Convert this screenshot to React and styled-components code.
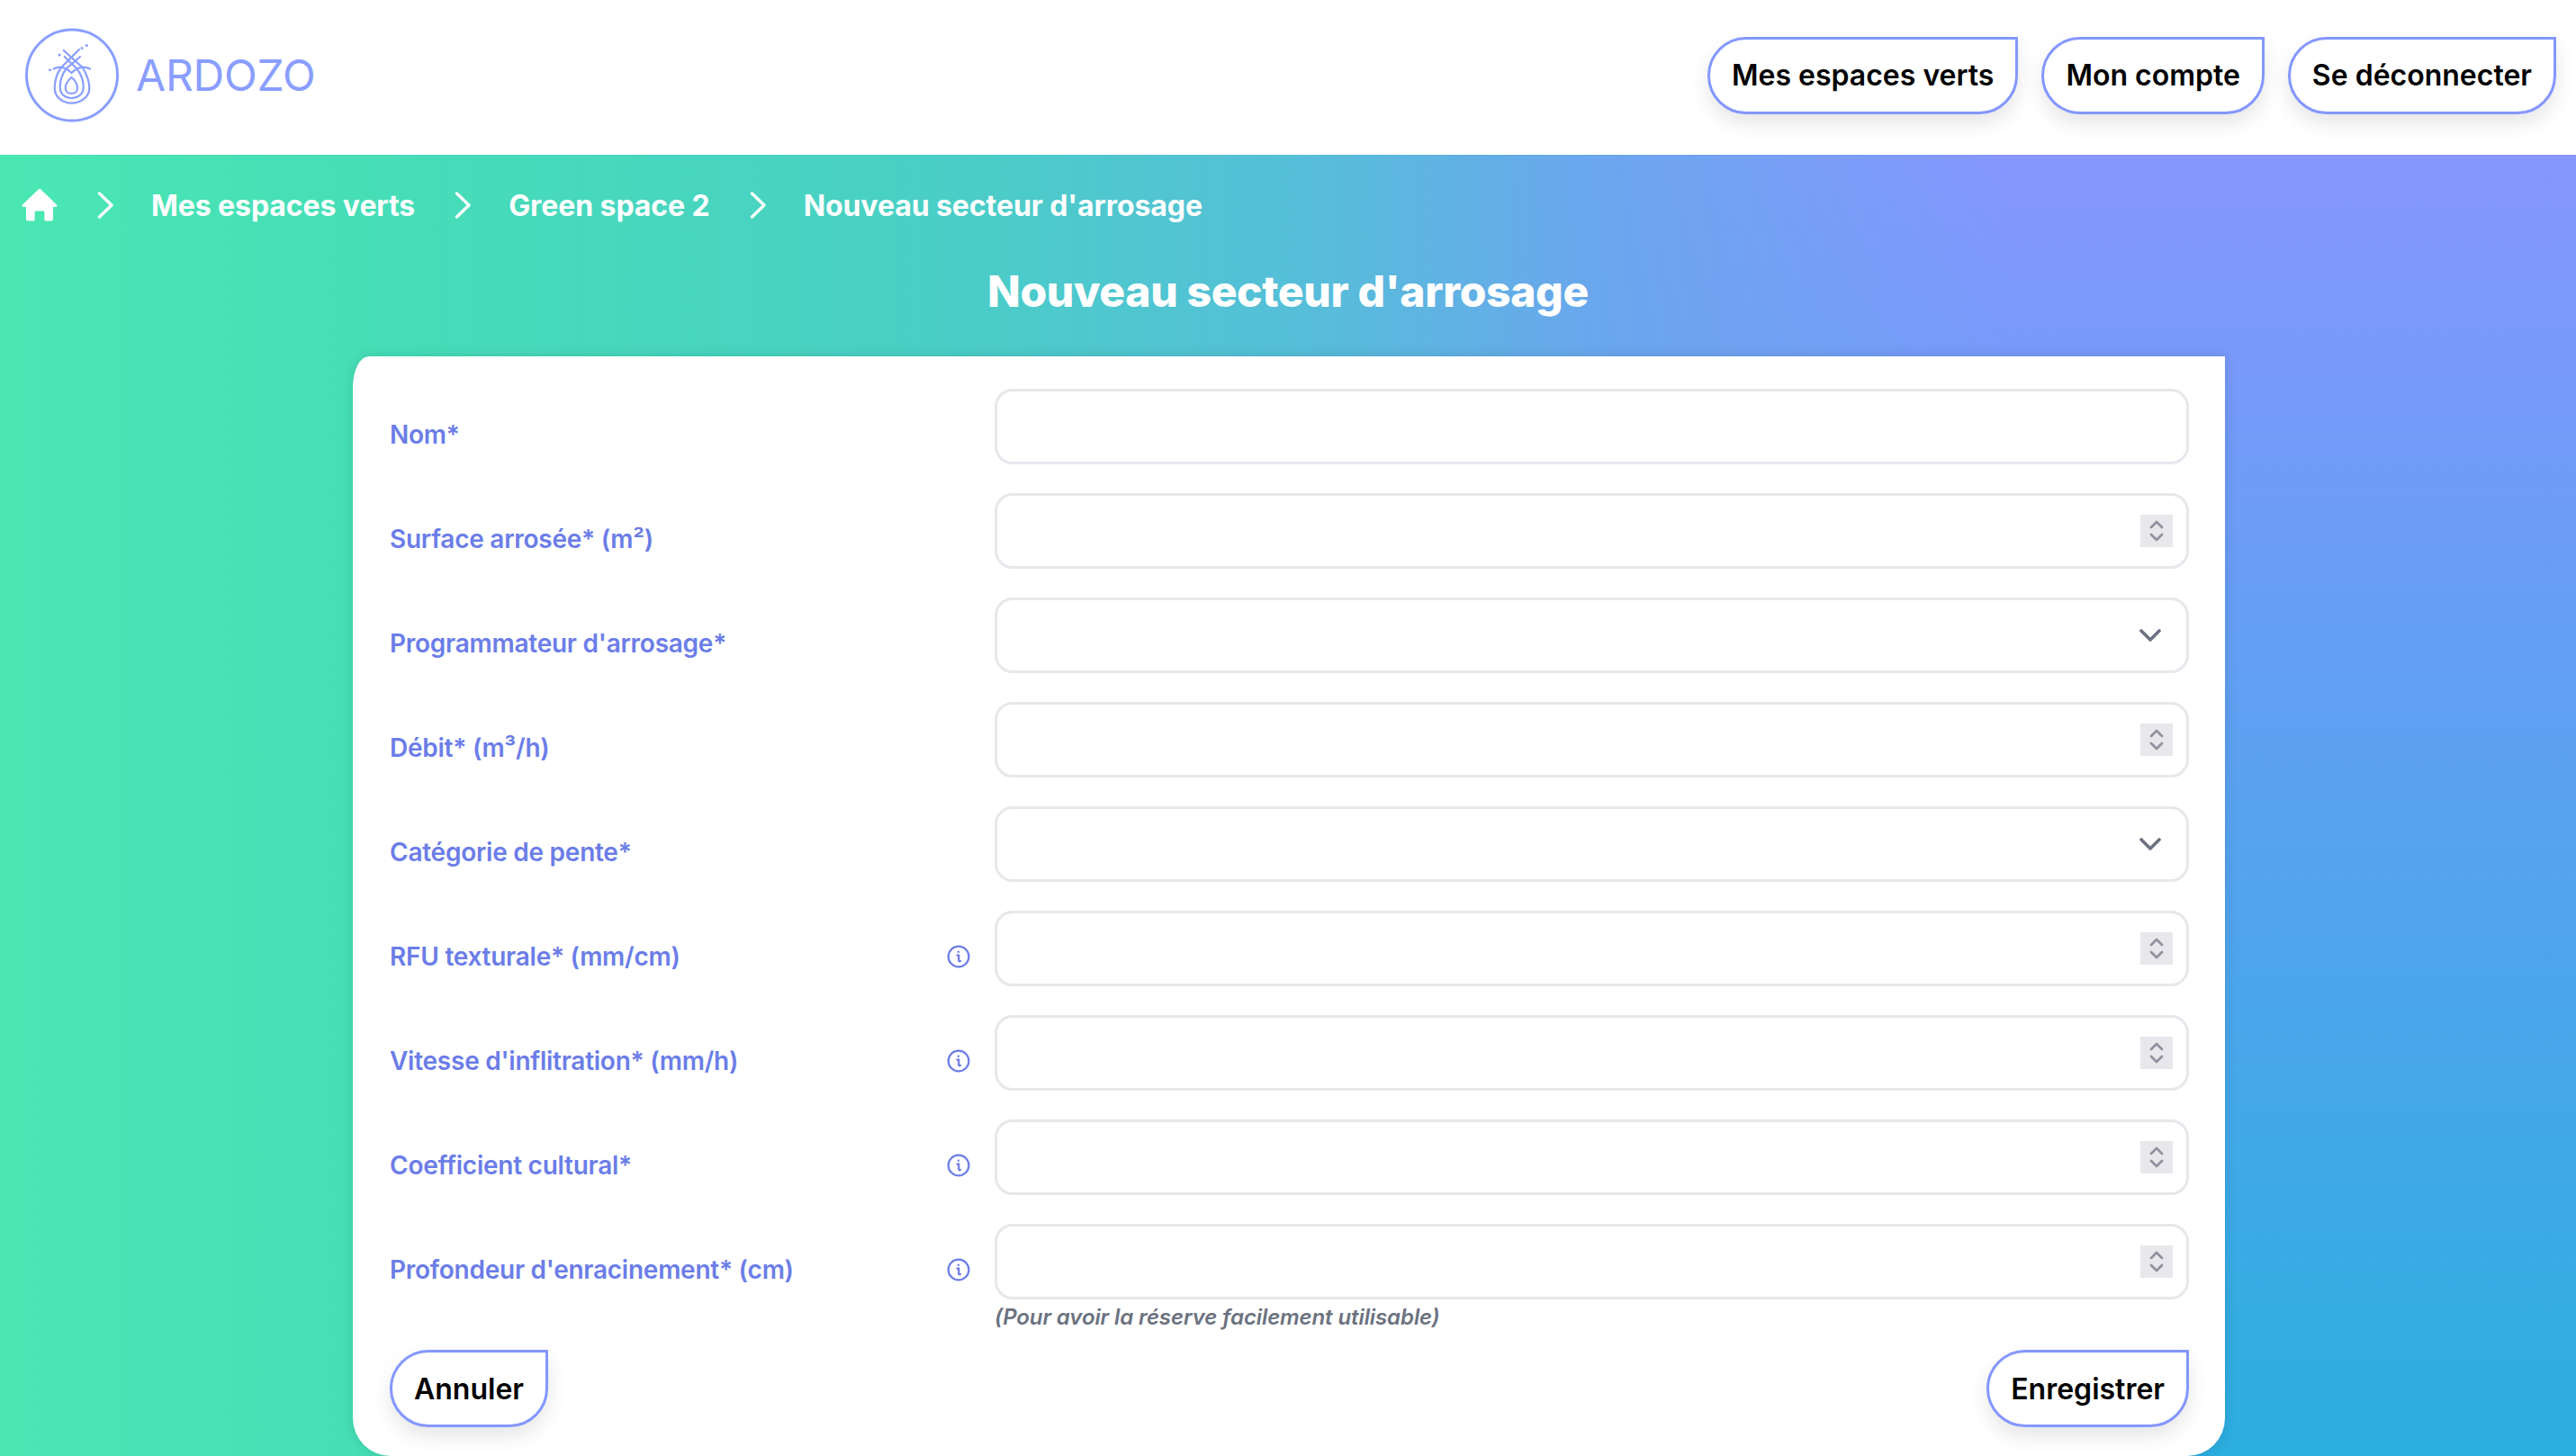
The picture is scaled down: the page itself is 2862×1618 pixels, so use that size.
import { createGlobalStyle, styled } from "styled-components";

const GlobalStyle = createGlobalStyle`
  html, body {
    margin: 0;
    padding: 0;
    height: 100%;
    overflow: hidden;
    font-family: Inter, "Liberation Sans", sans-serif;
  }
  * {
    box-sizing: border-box;
  }
`;

const Page = styled.div`
  display: flex;
  flex-direction: column;
  height: 100vh;
  overflow: hidden;
`;

const Header = styled.header`
  display: flex;
  align-items: center;
  justify-content: space-between;
  height: 172px;
  flex-shrink: 0;
  padding: 0 22px 5px 26px;
  background: #fff;
`;

const Brand = styled.div`
  display: flex;
  align-items: center;
  gap: 17px;
`;

const BrandName = styled.span`
  color: #8a9eff;
  font-size: 48px;
  font-weight: 400;
  letter-spacing: -0.2px;
  line-height: 1;
`;

const Nav = styled.nav`
  display: flex;
  gap: 26px;
`;

const PillButton = styled.button`
  height: 86px;
  padding: 0 24px;
  border: 3px solid #8497ff;
  border-radius: 43px 0 43px 43px;
  background: #fff;
  box-shadow: 0 10px 22px rgba(0, 0, 0, 0.1);
  color: #000;
  font-family: inherit;
  font-size: 32px;
  font-weight: 600;
`;

const Main = styled.main`
  flex: 1;
  display: flex;
  flex-direction: column;
  min-height: 0;
  background:
    linear-gradient(
      to right,
      #4ae7b3 0%,
      #46deb7 14%,
      #49d0c4 35%,
      #55bfd8 50%,
      rgba(104, 168, 236, 0.9) 62%,
      rgba(125, 155, 250, 0) 78%
    ),
    linear-gradient(to bottom, #8696ff 0%, #2baee0 100%);
`;

const Breadcrumb = styled.div`
  display: flex;
  align-items: center;
  height: 112px;
  padding-left: 24px;
  color: #fff;
  font-size: 32px;
  font-weight: 700;
`;

const Crumb = styled.span`
  white-space: nowrap;
  letter-spacing: -0.08px;
`;

const Separator = styled.svg`
  flex-shrink: 0;
  width: 18px;
  height: 30px;
  margin: 0 42px 0 44px;
`;

const PageTitle = styled.h1`
  margin: 0;
  height: 112px;
  padding-top: 10px;
  color: #fff;
  font-size: 48px;
  font-weight: 800;
  letter-spacing: -0.35px;
  line-height: 60px;
  text-align: center;
`;

const Card = styled.section`
  flex: 1;
  margin: 0 390px 0 392px;
  padding: 36px 40px 0 41px;
  border-radius: 18px 0 42px 42px / 34px 0 42px 42px;
  background: #fff;
  box-shadow: 0 0 14px rgba(0, 0, 0, 0.12);
`;

const Rows = styled.div`
  display: flex;
  flex-direction: column;
  gap: 32px;
`;

const Row = styled.div`
  display: grid;
  grid-template-columns: 1fr 1327px;
  align-items: start;
`;

const LabelCell = styled.div`
  display: flex;
  align-items: center;
  justify-content: space-between;
  height: 84px;
  padding: 17px 27px 0 0;
`;

const Label = styled.label`
  color: #6b7de8;
  font-size: 28px;
  font-weight: 600;
  letter-spacing: -0.25px;
`;

const Field = styled.div`
  display: flex;
  align-items: center;
  height: 84px;
  padding: 0 ${(p) => p.$pad}px 0 24px;
  border: 3px solid #e7e7ec;
  border-radius: 20px;
`;

const TextInput = styled.input`
  flex: 1;
  min-width: 0;
  border: 0;
  outline: 0;
  background: transparent;
  font-family: inherit;
  font-size: 28px;
`;

const Spinner = styled.span`
  display: flex;
  align-items: center;
  justify-content: center;
  width: 36px;
  height: 36px;
  background: #e8e7ec;
`;

const Hint = styled.p`
  margin: 5px 0 0;
  color: #6b7280;
  font-size: 24px;
  font-style: italic;
  font-weight: 600;
  letter-spacing: -0.1px;
  line-height: 29px;
`;

const Actions = styled.div`
  display: flex;
  justify-content: space-between;
  margin-top: 22px;
`;

const Logo = () => (
  <svg width="108" height="108" viewBox="26 30 108 108" fill="none" stroke="#8a9eff" strokeWidth="2.2" strokeLinecap="round">
    <circle cx="80" cy="83.5" r="50.5" strokeWidth="3" />
    <path d="M79.5 86C74.5 90 72.7 95 72.7 98C72.7 102 76 104 79.5 104C83 104 86 102 86 98C86 95 84.5 90 79.5 86Z" />
    <path d="M71.7 63L85 76C90 82 92.7 90 92.7 97C92.7 105 86 109 79.5 109C73 109 66.7 105 66.7 97C66.7 90 69 82 74 76L89 63" />
    <path d="M70.7 56L91.7 75C96 82 99.3 90 99.3 98C99.3 109 88 114.7 79.5 114.7C71 114.7 60.7 109 60.7 98C60.7 90 63 82 68 75L88 55" />
    <path d="M59.5 76.5C65 73.5 72 73.5 79.5 81C87 73.5 94 73.5 100 76.5" />
    <path d="M55.5 77.7h0.1M66 61h0.1M91 53.5h0.1M96.3 50.5h0.1" strokeWidth="3" />
  </svg>
);

const HomeIcon = () => (
  <svg width="40" height="36" viewBox="0 0 40 36" fill="#fff">
    <path d="M18.6 0.6a2 2 0 0 1 2.8 0L39 17.4c1 1 .4 2.6-1 2.6h-3v13.6a2 2 0 0 1-2 2h-6.6a1 1 0 0 1-1-1V26a1.4 1.4 0 0 0-1.4-1.4h-8A1.4 1.4 0 0 0 14.6 26v8.6a1 1 0 0 1-1 1H7a2 2 0 0 1-2-2V20H2c-1.4 0-2-1.6-1-2.6Z" />
  </svg>
);

const ChevronSep = () => (
  <Separator viewBox="0 0 18 30" fill="none" stroke="#fff" strokeWidth="3.4" strokeLinecap="round" strokeLinejoin="round">
    <path d="M2.5 2L16 15L2.5 28" />
  </Separator>
);

const InfoIcon = () => (
  <svg width="26" height="26" viewBox="0 0 26 26" fill="none" stroke="#6b7de8" strokeWidth="2.2" strokeLinecap="round">
    <circle cx="13" cy="13" r="11.4" />
    <path d="M11.4 11.6H13.2V17.2C13.2 18.2 14 18.6 15 18" />
    <circle cx="12.8" cy="7.8" r="1.2" fill="#6b7de8" stroke="none" />
  </svg>
);

const SpinnerIcon = () => (
  <Spinner>
    <svg width="16" height="28" viewBox="0 0 16 28" fill="none" stroke="#92919f" strokeWidth="2.8" strokeLinecap="round" strokeLinejoin="round">
      <path d="M2 10L8 4L14 10M2 18L8 24L14 18" />
    </svg>
  </Spinner>
);

const SelectChevron = () => (
  <svg width="24" height="16" viewBox="0 0 24 16" fill="none" stroke="#6b7280" strokeWidth="3.6" strokeLinecap="round" strokeLinejoin="round">
    <path d="M2 3L12 13L22 3" />
  </svg>
);

const fields = [
  { label: "Nom*", kind: "text" },
  { label: "Surface arrosée* (m²)", kind: "number" },
  { label: "Programmateur d'arrosage*", kind: "select" },
  { label: "Débit* (m³/h)", kind: "number" },
  { label: "Catégorie de pente*", kind: "select" },
  { label: "RFU texturale* (mm/cm)", kind: "number", info: true },
  { label: "Vitesse d'inflitration* (mm/h)", kind: "number", info: true },
  { label: "Coefficient cultural*", kind: "number", info: true },
  {
    label: "Profondeur d'enracinement* (cm)",
    kind: "number",
    info: true,
    hint: "(Pour avoir la réserve facilement utilisable)",
  },
];

const FormRow = ({ label, kind, info, hint }) => (
  <Row>
    <LabelCell>
      <Label>{label}</Label>
      {info && <InfoIcon />}
    </LabelCell>
    <div>
      <Field $pad={kind === "select" ? 28 : 15}>
        <TextInput aria-label={label} />
        {kind === "number" && <SpinnerIcon />}
        {kind === "select" && <SelectChevron />}
      </Field>
      {hint && <Hint>{hint}</Hint>}
    </div>
  </Row>
);

const App = () => (
  <Page>
    <GlobalStyle />
    <Header>
      <Brand>
        <Logo />
        <BrandName>ARDOZO</BrandName>
      </Brand>
      <Nav>
        <PillButton>Mes espaces verts</PillButton>
        <PillButton>Mon compte</PillButton>
        <PillButton>Se déconnecter</PillButton>
      </Nav>
    </Header>
    <Main>
      <Breadcrumb>
        <HomeIcon />
        <ChevronSep />
        <Crumb>Mes espaces verts</Crumb>
        <ChevronSep />
        <Crumb>Green space 2</Crumb>
        <ChevronSep />
        <Crumb>Nouveau secteur d'arrosage</Crumb>
      </Breadcrumb>
      <PageTitle>Nouveau secteur d'arrosage</PageTitle>
      <Card>
        <Rows>
          {fields.map((f) => (
            <FormRow key={f.label} {...f} />
          ))}
        </Rows>
        <Actions>
          <PillButton>Annuler</PillButton>
          <PillButton>Enregistrer</PillButton>
        </Actions>
      </Card>
    </Main>
  </Page>
);

export default App;
